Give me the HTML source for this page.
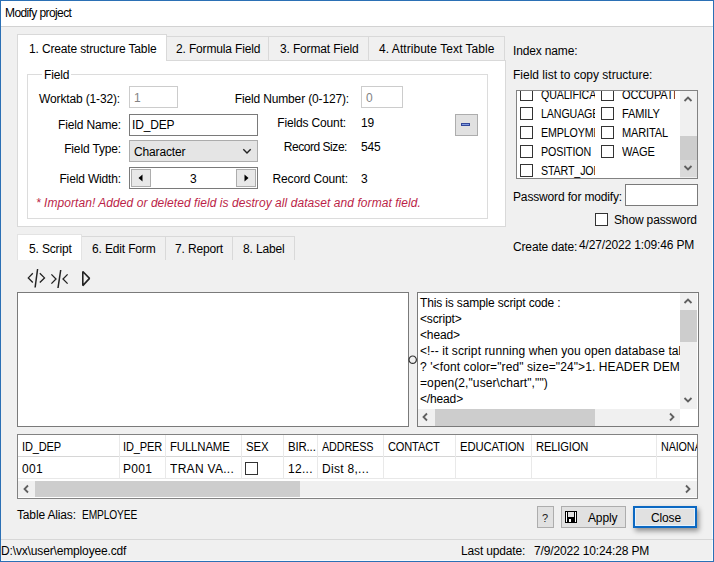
<!DOCTYPE html>
<html><head><meta charset="utf-8">
<style>
*{margin:0;padding:0;box-sizing:border-box}
html,body{width:714px;height:562px;overflow:hidden;background:#f0f0f0}
body{position:relative;font-family:"Liberation Sans",sans-serif;font-size:12px;color:#000;letter-spacing:-0.15px}
.a{position:absolute}
.t{position:absolute;white-space:pre;line-height:14px;height:14px}
.r{text-align:right}
.bx{position:absolute;border:1px solid #7a7a7a;background:#fff}
.btn{position:absolute;border:1px solid #adadad;background:#e1e1e1}
.cb{position:absolute;width:13px;height:13px;border:1px solid #333;background:#fff}
.tab{position:absolute;border:1px solid #d9d9d9;background:#f0f0f0}
.sep{position:absolute;background:#e9e9e9;width:1px}
</style></head><body>
<!-- window frame -->
<div class="a" style="left:1px;top:1px;width:712px;height:560px;border-right:1px solid #f6fbff;border-bottom:1px solid #f6fbff"></div>
<div class="a" style="left:0;top:0;width:714px;height:562px;border:1px solid #2b70b5"></div>
<div class="a" style="left:1px;top:1px;width:712px;height:25px;background:#fff"></div>
<div class="a" style="left:1px;top:26px;width:712px;height:1px;background:#d2d2d2"></div>
<div class="t" style="left:5px;top:6px;letter-spacing:-0.6px">Modify project</div>

<!-- top tab control -->
<div class="a" style="left:17px;top:60px;width:489px;height:167px;border:1px solid #d9d9d9;background:#fff"></div>
<div class="tab" style="left:166px;top:36px;width:103px;height:25px"></div>
<div class="tab" style="left:268px;top:36px;width:101px;height:25px"></div>
<div class="tab" style="left:368px;top:36px;width:137px;height:25px"></div>
<div class="a" style="left:17px;top:34px;width:150px;height:27px;border:1px solid #d9d9d9;border-bottom:none;background:#fff"></div>
<div class="t" style="left:29px;top:42px">1. Create structure Table</div>
<div class="t" style="left:176px;top:42px">2. Formula Field</div>
<div class="t" style="left:280px;top:42px">3. Format Field</div>
<div class="t" style="left:379px;top:42px;letter-spacing:0.05px">4. Attribute Text Table</div>

<!-- group box -->
<div class="a" style="left:27px;top:74px;width:461px;height:145px;border:1px solid #dcdcdc"></div>
<div class="a" style="left:42px;top:68px;width:29px;height:12px;background:#fff"></div>
<div class="t" style="left:44px;top:68px">Field</div>

<div class="t r" style="left:0;width:120px;top:92px">Worktab (1-32):</div>
<div class="t r" style="left:0;width:121px;top:118px">Field Name:</div>
<div class="t r" style="left:0;width:121px;top:142px">Field Type:</div>
<div class="t r" style="left:0;width:121px;top:172px">Field Width:</div>

<div class="bx" style="left:129px;top:86px;width:49px;height:22px;border-color:#cccccc"></div>
<div class="t" style="left:134px;top:91px;color:#838383">1</div>
<div class="bx" style="left:129px;top:114px;width:129px;height:22px"></div>
<div class="t" style="left:132px;top:118px">ID_DEP</div>
<div class="btn" style="left:129px;top:140px;width:129px;height:22px;background:#e5e5e5;border-color:#acacac"></div>
<div class="t" style="left:134px;top:145px">Character</div>
<svg class="a" style="left:242px;top:147px" width="10" height="8"><path d="M1.3 2.3 L5 6 L8.7 2.3" fill="none" stroke="#222" stroke-width="1.4"/></svg>
<div class="bx" style="left:129px;top:167px;width:129px;height:22px"></div>
<div class="btn" style="left:131px;top:169px;width:20px;height:18px;background:#e8e8e8"></div>
<div class="btn" style="left:236px;top:169px;width:20px;height:18px;background:#e8e8e8"></div>
<svg class="a" style="left:137px;top:174px" width="8" height="8"><path d="M5.5 0.5 L5.5 7.5 L1.5 4 Z" fill="#000"/></svg>
<svg class="a" style="left:242px;top:174px" width="8" height="8"><path d="M2.5 0.5 L2.5 7.5 L6.5 4 Z" fill="#000"/></svg>
<div class="t" style="left:190px;top:172px">3</div>

<div class="t r" style="left:0;width:349px;top:92px">Field Number (0-127):</div>
<div class="t r" style="left:0;width:346px;top:116px">Fields Count:</div>
<div class="t r" style="left:0;width:347px;top:140px;letter-spacing:-0.45px">Record Size:</div>
<div class="t r" style="left:0;width:348px;top:172px">Record Count:</div>
<div class="bx" style="left:361px;top:86px;width:42px;height:22px;border-color:#cccccc"></div>
<div class="t" style="left:366px;top:91px;color:#838383">0</div>
<div class="t" style="left:361px;top:116px">19</div>
<div class="t" style="left:361px;top:140px">545</div>
<div class="t" style="left:361px;top:172px">3</div>
<div class="btn" style="left:455px;top:114px;width:23px;height:22px"></div>
<div class="a" style="left:461px;top:123px;width:9px;height:3px;background:#7f9be0;border:1px solid #34489a"></div>

<div class="t" style="left:36px;top:196px;color:#bb1f48;font-style:italic;letter-spacing:0.06px">* Importan! Added or deleted field is destroy all dataset and format field.</div>

<!-- right panel -->
<div class="t" style="left:513px;top:44px">Index name:</div>
<div class="t" style="left:513px;top:68px;letter-spacing:0px">Field list to copy structure:</div>
<div class="bx" style="left:516px;top:90px;width:182px;height:89px;border-color:#828282;overflow:hidden"></div>
<div class="a" style="left:517px;top:91px;width:163px;height:87px;overflow:hidden">
<div class="cb" style="left:3px;top:-3px"></div><div class="t" style="left:24px;top:-3px;width:54px;overflow:hidden"><span style="display:inline-block;transform:scaleX(0.89);transform-origin:0 0">QUALIFICATION</span></div>
<div class="cb" style="left:84px;top:-3px"></div><div class="t" style="left:105px;top:-3px;width:53px;overflow:hidden"><span style="display:inline-block;transform:scaleX(0.92);transform-origin:0 0">OCCUPATION</span></div>
<div class="cb" style="left:3px;top:16px"></div><div class="t" style="left:24px;top:16px;width:54px;overflow:hidden"><span style="display:inline-block;transform:scaleX(0.89);transform-origin:0 0">LANGUAGE</span></div>
<div class="cb" style="left:84px;top:16px"></div><div class="t" style="left:105px;top:16px;width:53px;overflow:hidden"><span style="display:inline-block;transform:scaleX(0.92);transform-origin:0 0">FAMILY</span></div>
<div class="cb" style="left:3px;top:35px"></div><div class="t" style="left:24px;top:35px;width:54px;overflow:hidden"><span style="display:inline-block;transform:scaleX(0.89);transform-origin:0 0">EMPLOYMENT</span></div>
<div class="cb" style="left:84px;top:35px"></div><div class="t" style="left:105px;top:35px;width:53px;overflow:hidden"><span style="display:inline-block;transform:scaleX(0.92);transform-origin:0 0">MARITAL</span></div>
<div class="cb" style="left:3px;top:54px"></div><div class="t" style="left:24px;top:54px;width:54px;overflow:hidden"><span style="display:inline-block;transform:scaleX(0.89);transform-origin:0 0">POSITION</span></div>
<div class="cb" style="left:84px;top:54px"></div><div class="t" style="left:105px;top:54px;width:53px;overflow:hidden"><span style="display:inline-block;transform:scaleX(0.92);transform-origin:0 0">WAGE</span></div>
<div class="cb" style="left:3px;top:73px"></div><div class="t" style="left:24px;top:73px;width:54px;overflow:hidden"><span style="display:inline-block;transform:scaleX(0.89);transform-origin:0 0">START_JOB</span></div>
</div>
<div class="a" style="left:680px;top:91px;width:17px;height:87px;background:#f0f0f0"></div>
<div class="a" style="left:680px;top:136px;width:17px;height:24px;background:#cdcdcd"></div>
<div class="a" style="left:680px;top:160px;width:17px;height:17px;background:#dadada"></div>
<svg class="a" style="left:683px;top:95px" width="10" height="8"><path d="M1.5 6 L5 2.5 L8.5 6" fill="none" stroke="#606060" stroke-width="1.8"/></svg>
<svg class="a" style="left:683px;top:164px" width="10" height="8"><path d="M1.5 2 L5 5.5 L8.5 2" fill="none" stroke="#606060" stroke-width="1.8"/></svg>

<div class="t" style="left:513px;top:190px">Password for modify:</div>
<div class="bx" style="left:625px;top:184px;width:73px;height:22px"></div>
<div class="cb" style="left:595px;top:213px"></div>
<div class="t" style="left:614px;top:213px">Show password</div>
<div class="t" style="left:513px;top:240px">Create date:</div>
<div class="t" style="left:579px;top:238px">4/27/2022 1:09:46 PM</div>

<!-- second tab control -->
<div class="tab" style="left:81px;top:236px;width:85px;height:24px;border-bottom:none"></div>
<div class="tab" style="left:165px;top:236px;width:68px;height:24px;border-bottom:none"></div>
<div class="tab" style="left:232px;top:236px;width:63px;height:24px;border-bottom:none"></div>
<div class="a" style="left:17px;top:234px;width:65px;height:26px;border:1px solid #e3e3e3;border-bottom:none;background:#fff"></div>
<div class="t" style="left:29px;top:242px">5. Script</div>
<div class="t" style="left:92px;top:242px">6. Edit Form</div>
<div class="t" style="left:175px;top:242px">7. Report</div>
<div class="t" style="left:243px;top:242px">8. Label</div>

<!-- script boxes -->
<div class="bx" style="left:17px;top:292px;width:392px;height:135px"></div>
<div class="bx" style="left:417px;top:292px;width:282px;height:135px;overflow:hidden"></div>
<div class="a" style="left:418px;top:293px;width:262px;height:116px;overflow:hidden">
<div class="t" style="left:2px;top:3px">This is sample script code :</div>
<div class="t" style="left:2px;top:19px">&lt;script&gt;</div>
<div class="t" style="left:2px;top:35px">&lt;head&gt;</div>
<div class="t" style="left:2px;top:51px;letter-spacing:0.1px">&lt;!-- it script running when you open database table</div>
<div class="t" style="left:2px;top:67px;letter-spacing:0.1px">? '&lt;font color="red" size="24"&gt;1. HEADER DEMO</div>
<div class="t" style="left:2px;top:83px;letter-spacing:0.1px">=open(2,"user\chart","")</div>
<div class="t" style="left:2px;top:99px">&lt;/head&gt;</div>
</div>
<div class="a" style="left:680px;top:293px;width:17px;height:116px;background:#f0f0f0"></div>
<div class="a" style="left:680px;top:310px;width:17px;height:32px;background:#cdcdcd"></div>
<div class="a" style="left:418px;top:409px;width:262px;height:17px;background:#f0f0f0"></div>
<div class="a" style="left:435px;top:409px;width:160px;height:17px;background:#cdcdcd"></div>
<svg class="a" style="left:683px;top:297px" width="10" height="8"><path d="M1.5 6 L5 2.5 L8.5 6" fill="none" stroke="#606060" stroke-width="1.8"/></svg>
<svg class="a" style="left:683px;top:396px" width="10" height="8"><path d="M1.5 2 L5 5.5 L8.5 2" fill="none" stroke="#606060" stroke-width="1.8"/></svg>
<svg class="a" style="left:421px;top:412px" width="8" height="10"><path d="M6 1.5 L2.5 5 L6 8.5" fill="none" stroke="#606060" stroke-width="1.8"/></svg>
<svg class="a" style="left:668px;top:412px" width="8" height="10"><path d="M2 1.5 L5.5 5 L2 8.5" fill="none" stroke="#606060" stroke-width="1.8"/></svg>
<svg class="a" style="left:408px;top:355px" width="10" height="10"><circle cx="4.7" cy="4.7" r="3.7" fill="none" stroke="#333" stroke-width="1.2"/></svg>
<!-- toolbar icons -->
<svg class="a" style="left:24px;top:266px" width="70" height="24">
<g fill="none" stroke="#222" stroke-width="1.3" stroke-linecap="butt">
<path d="M8.8 7.3 L4.3 11.9 L8.8 16.5"/>
<path d="M15.8 7.3 L20.5 11.9 L15.8 16.5"/>
<path d="M13.6 3 L11.1 21.5" stroke-width="1.5"/>
<path d="M27.4 8.4 L32 13 L27.4 17.6"/>
<path d="M36.7 4 L34 22" stroke-width="1.5"/>
<path d="M43.6 8.4 L39 13 L43.6 17.6"/>
<path d="M58.8 5.5 L58.8 19.6 L65.5 12.4 Z" stroke-width="1.6" stroke-linejoin="bevel"/>
</g>
</svg>

<!-- grid -->
<div class="bx" style="left:17px;top:434px;width:681px;height:65px;border-color:#828282"></div>
<div class="a" style="left:18px;top:435px;width:679px;height:62px;overflow:hidden">
<div class="a" style="left:0;top:21px;width:679px;height:1px;background:#d6d6d6"></div>
<div class="a" style="left:0;top:43px;width:679px;height:1px;background:#e8e8e8"></div>
<div class="t" style="left:4px;top:5px;width:96px;overflow:hidden"><span style="display:inline-block;transform:scaleX(0.92);transform-origin:0 0">ID_DEP</span></div>
<div class="t" style="left:4px;top:27px;width:96px;overflow:hidden;letter-spacing:0.3px">001</div>
<div class="sep" style="left:101px;top:0;height:44px"></div>
<div class="t" style="left:105px;top:5px;width:40px;overflow:hidden"><span style="display:inline-block;transform:scaleX(0.92);transform-origin:0 0">ID_PER</span></div>
<div class="t" style="left:105px;top:27px;width:40px;overflow:hidden;letter-spacing:0.3px">P001</div>
<div class="sep" style="left:147px;top:0;height:44px"></div>
<div class="t" style="left:152px;top:5px;width:70px;overflow:hidden"><span style="display:inline-block;transform:scaleX(0.95);transform-origin:0 0">FULLNAME</span></div>
<div class="t" style="left:152px;top:27px;width:70px;overflow:hidden;letter-spacing:0.3px">TRAN VA...</div>
<div class="sep" style="left:223px;top:0;height:44px"></div>
<div class="t" style="left:228px;top:5px;width:36px;overflow:hidden"><span style="display:inline-block;transform:scaleX(0.95);transform-origin:0 0">SEX</span></div>
<div class="sep" style="left:265px;top:0;height:44px"></div>
<div class="t" style="left:270px;top:5px;width:28px;overflow:hidden"><span style="display:inline-block;transform:scaleX(0.95);transform-origin:0 0">BIR...</span></div>
<div class="t" style="left:270px;top:27px;width:28px;overflow:hidden;letter-spacing:0.3px">12...</div>
<div class="sep" style="left:299px;top:0;height:44px"></div>
<div class="t" style="left:304px;top:5px;width:60px;overflow:hidden"><span style="display:inline-block;transform:scaleX(0.9);transform-origin:0 0">ADDRESS</span></div>
<div class="t" style="left:304px;top:27px;width:60px;overflow:hidden;letter-spacing:0.3px">Dist 8,...</div>
<div class="sep" style="left:365px;top:0;height:44px"></div>
<div class="t" style="left:370px;top:5px;width:66px;overflow:hidden"><span style="display:inline-block;transform:scaleX(0.92);transform-origin:0 0">CONTACT</span></div>
<div class="sep" style="left:437px;top:0;height:44px"></div>
<div class="t" style="left:442px;top:5px;width:70px;overflow:hidden"><span style="display:inline-block;transform:scaleX(0.94);transform-origin:0 0">EDUCATION</span></div>
<div class="sep" style="left:513px;top:0;height:44px"></div>
<div class="t" style="left:518px;top:5px;width:119px;overflow:hidden"><span style="display:inline-block;transform:scaleX(0.93);transform-origin:0 0">RELIGION</span></div>
<div class="sep" style="left:638px;top:0;height:44px"></div>
<div class="t" style="left:643px;top:5px;width:98px;overflow:hidden"><span style="display:inline-block;transform:scaleX(0.9);transform-origin:0 0">NAIONALITY</span></div>
<div class="cb" style="left:227px;top:27px"></div>
<div class="a" style="left:0;top:46px;width:679px;height:16px;background:#f0f0f0"></div>
<div class="a" style="left:17px;top:46px;width:265px;height:16px;background:#cdcdcd"></div>
<svg class="a" style="left:4px;top:49px" width="8" height="10"><path d="M6 1.5 L2.5 5 L6 8.5" fill="none" stroke="#606060" stroke-width="1.8"/></svg>
<svg class="a" style="left:666px;top:49px" width="8" height="10"><path d="M2 1.5 L5.5 5 L2 8.5" fill="none" stroke="#606060" stroke-width="1.8"/></svg>
</div>

<!-- bottom -->
<div class="t" style="left:17px;top:508px">Table Alias:</div>
<div class="t" style="left:82px;top:508px;transform:scaleX(0.85);transform-origin:0 0">EMPLOYEE</div>
<div class="btn" style="left:537px;top:506px;width:17px;height:22px"></div>
<div class="t" style="left:542px;top:511px;font-size:11px;color:#222">?</div>
<div class="btn" style="left:561px;top:506px;width:65px;height:22px"></div>
<div class="t" style="left:588px;top:511px">Apply</div>
<svg class="a" style="left:565px;top:511px" width="12" height="12" shape-rendering="crispEdges">
<rect x="0" y="0" width="12" height="12" fill="#000"/>
<rect x="1" y="1" width="10" height="10" fill="#fff"/>
<rect x="2" y="1" width="8" height="10" fill="#000"/>
<rect x="3" y="1" width="6" height="5" fill="#e0e0e0"/>
<rect x="4" y="8" width="2" height="3" fill="#fff"/>
</svg>
<div class="a" style="left:633px;top:506px;width:64px;height:22px;border:2px solid #0b68c2;background:#e1e1e1;box-shadow:2px 3px 5px rgba(0,0,0,0.4),inset 0 0 0 1px #e4f3ff"></div>
<div class="t" style="left:651px;top:511px">Close</div>

<!-- status bar -->
<div class="a" style="left:1px;top:539px;width:712px;height:1px;background:#d7d7d7"></div>
<div class="t" style="left:1px;top:544px">D:\vx\user\employee.cdf</div>
<div class="t" style="left:461px;top:544px">Last update:</div>
<div class="t" style="left:534px;top:544px">7/9/2022 10:24:28 PM</div>
</body></html>
